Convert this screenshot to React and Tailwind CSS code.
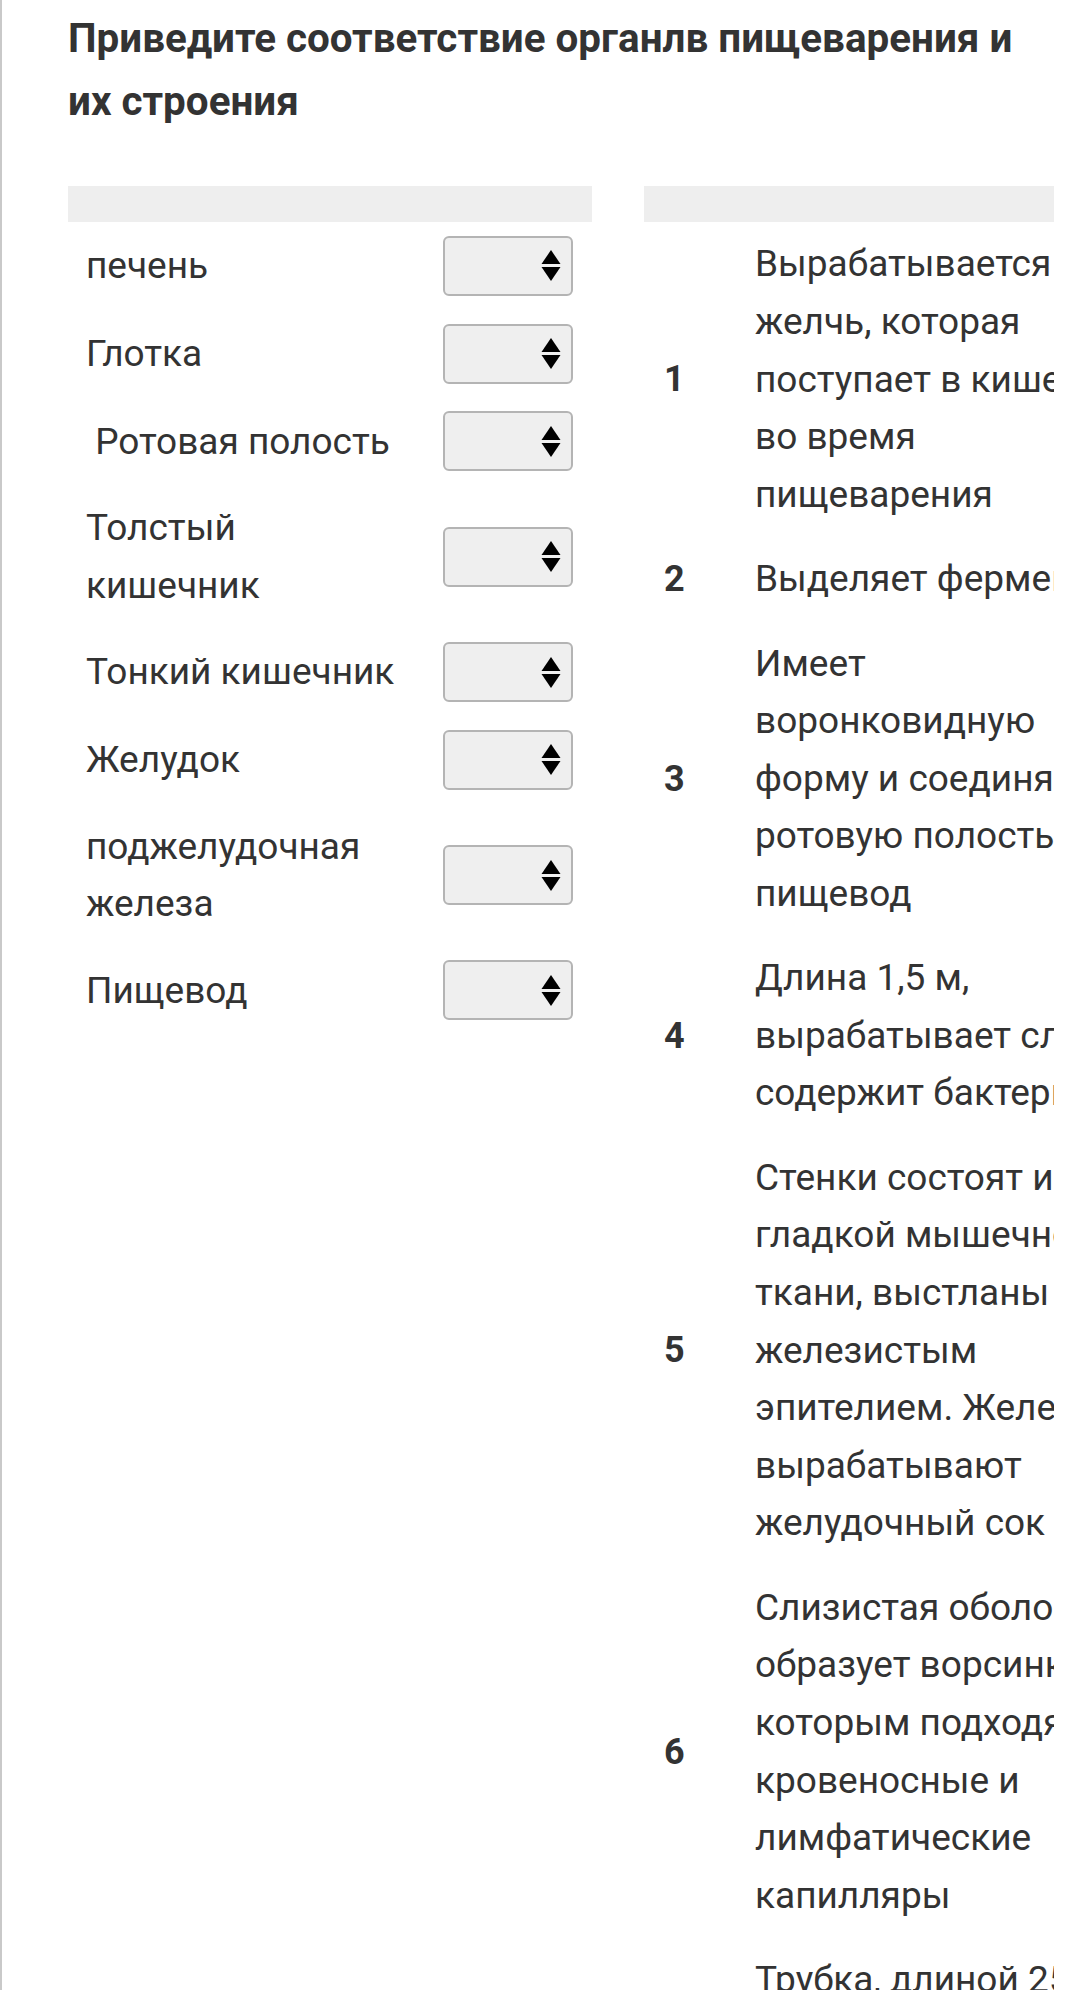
import React from "react";

const leftRows = [
  ["печень"],
  ["Глотка"],
  ["\u00a0Ротовая полость"],
  ["Толстый", "кишечник"],
  ["Тонкий кишечник"],
  ["Желудок"],
  ["поджелудочная", "железа"],
  ["Пищевод"],
];

const rightRows = [
  ["1", ["Вырабатывается", "желчь, которая", "поступает в кишечник", "во время", "пищеварения"]],
  ["2", ["Выделяет ферменты"]],
  ["3", ["Имеет", "воронковидную", "форму и соединяет", "ротовую полость и", "пищевод"]],
  ["4", ["Длина 1,5 м,", "вырабатывает слизь,", "содержит бактерии"]],
  ["5", ["Стенки состоят из", "гладкой мышечной", "ткани, выстланы", "железистым", "эпителием. Железы", "вырабатывают", "желудочный сок"]],
  ["6", ["Слизистая оболочка", "образует ворсинки, к", "которым подходят", "кровеносные и", "лимфатические", "капилляры"]],
  ["7", ["Трубка, длиной 25 см,", "стенки состоят из", "мышц"]],
];

function SelectBox() {
  return (
    <div className="w-[130px] h-[60px] shrink-0 rounded-[6px] border-2 border-[#b4b4b4] bg-[#efefef] flex items-center justify-end pr-[10px]">
      <svg width="20" height="31" viewBox="0 0 20 31">
        <polygon points="10,0 19.5,14 0.5,14" fill="#000" />
        <polygon points="0.5,17 19.5,17 10,31" fill="#000" />
      </svg>
    </div>
  );
}

export default function App() {
  return (
    <div className="w-full min-h-[1990px] bg-white">
      <div className="w-[1054px] min-h-[1990px] overflow-hidden border-l-2 border-[#c9c9c9] font-['Roboto'] text-[#333]">
        <div className="pl-[66px] pt-[7px]">
          <h2 className="text-[40.4px] font-bold leading-[63px] whitespace-nowrap">
            Приведите соответствие органлв пищеварения и
            <br />
            их строения
          </h2>
          <div className="mt-[53px] flex items-start gap-[52px]">
            <div className="w-[524px] shrink-0">
              <div className="h-[36px] bg-[#eeeeee]" />
              {leftRows.map((lines, i) => (
                <div key={i} className="flex items-center pl-[18px] pr-[19px] py-[13.9px]">
                  <div className="flex-1 text-[37px] leading-[57.5px] whitespace-nowrap">
                    {lines.map((l, j) => (
                      <div key={j}>{l}</div>
                    ))}
                  </div>
                  <SelectBox />
                </div>
              ))}
            </div>
            <div className="w-[520px] shrink-0">
              <div className="h-[36px] bg-[#eeeeee]" />
              <div>
                {rightRows.map(([n, lines]) => (
                  <div key={n} className="flex items-center py-[13.4px]">
                    <div className="w-[111px] shrink-0 pl-[20px] text-[36px] font-bold leading-[44px]">{n}</div>
                    <div className="text-[37px] leading-[57.6px] whitespace-nowrap">
                      {lines.map((l, j) => (
                        <div key={j}>{l}</div>
                      ))}
                    </div>
                  </div>
                ))}
              </div>
            </div>
          </div>
        </div>
      </div>
    </div>
  );
}
